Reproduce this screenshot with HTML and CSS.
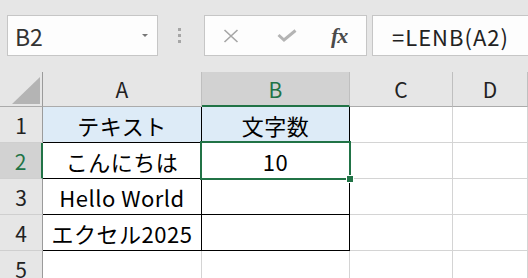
FILE: index.html
```html
<!DOCTYPE html>
<html lang="ja">
<head>
    <meta charset="UTF-8">
    <title>LENB</title>
    <link rel="stylesheet" href="styles.css">
</head>
<body>
<div class="topbar">
    <div class="namebox">
        <span>B2</span>
        <span class="arrow"></span>
    </div>
    <div class="grip"><i></i><i></i><i></i></div>
    <div class="fxbtns">
        <svg class="ico-x" width="16" height="14" viewBox="0 0 16 14">
            <path d="M1.5 1 L14.5 13 M14.5 1 L1.5 13" stroke="#a6a6a6" stroke-width="1.6" fill="none"/>
        </svg>
        <svg class="ico-check" width="20" height="13" viewBox="0 0 20 13">
            <path d="M1.5 6 L7 11 L18.5 1.5" stroke="#b4b4b4" stroke-width="3" fill="none"/>
        </svg>
        <span class="fx">fx</span>
    </div>
    <div class="formula">=LENB(A2)</div>
</div>

<div class="sheet">
    <div class="h corner"><div class="tri"></div></div>
    <div class="h">A</div>
    <div class="h sel">B</div>
    <div class="h">C</div>
    <div class="h">D</div>

    <div class="rh">1</div>
    <div class="c tb head">テキスト</div>
    <div class="c tb head">文字数</div>
    <div class="c"></div>
    <div class="c"></div>

    <div class="rh sel">2</div>
    <div class="c tb">こんにちは</div>
    <div class="c tb active">10</div>
    <div class="c"></div>
    <div class="c"></div>

    <div class="rh">3</div>
    <div class="c tb">Hello World</div>
    <div class="c tb"></div>
    <div class="c"></div>
    <div class="c"></div>

    <div class="rh">4</div>
    <div class="c tb">エクセル2025</div>
    <div class="c tb"></div>
    <div class="c"></div>
    <div class="c"></div>

    <div class="rh">5</div>
    <div class="c"></div>
    <div class="c"></div>
    <div class="c"></div>
    <div class="c"></div>
</div>
</body>
</html>
```

FILE: styles.css
```css
body {
    margin: 0;
    background: #e6e6e6;
    font-family: 'Noto Sans CJK JP', 'Noto Sans', sans-serif;
    color: #000;
    overflow: hidden;
}
.topbar {
    display: flex;
    height: 41px;
    padding: 15px 0 16px 7px;
}
.namebox {
    box-sizing: border-box;
    width: 151px;
    display: flex;
    align-items: center;
    justify-content: space-between;
    padding: 0 9px 0 7px;
    background: #fdfdfd;
    border: 1px solid #c6c6c6;
    font-size: 23px;
    color: #333;
}
.arrow {
    width: 0;
    height: 0;
    border-left: 3px solid transparent;
    border-right: 3px solid transparent;
    border-top: 3px solid #777;
}
.grip {
    width: 46px;
    display: flex;
    flex-direction: column;
    justify-content: center;
    gap: 3px;
    padding-left: 20px;
    box-sizing: border-box;
}
.grip i {
    width: 3px;
    height: 3px;
    background: #a6a6a6;
}
.fxbtns {
    box-sizing: border-box;
    width: 163px;
    display: flex;
    align-items: center;
    padding-left: 18px;
    background: #fdfdfd;
    border: 1px solid #c6c6c6;
}
.ico-check {
    margin-left: 38px;
}
.fx {
    margin-left: 34px;
    font-family: 'Liberation Serif', serif;
    font-style: italic;
    font-weight: bold;
    font-size: 22px;
    color: #4a4a4a;
    letter-spacing: -1px;
}
.formula {
    box-sizing: border-box;
    flex: 1;
    margin: 0 -10px 0 5px;
    padding: 0 0 0 19px;
    display: flex;
    align-items: center;
    background: #fdfdfd;
    border: 1px solid #c6c6c6;
    font-size: 22px;
    letter-spacing: 1px;
    color: #222;
}
.sheet {
    display: grid;
    grid-template-columns: 43px 159px 148px 103px 1fr;
    grid-template-rows: 35px repeat(5, 36px);
    background: #fff;
}
.sheet > div {
    box-sizing: border-box;
    display: flex;
    align-items: center;
    justify-content: center;
    font-size: 21px;
}
.h {
    background: #e6e6e6;
    border-right: 1px solid #bfbfbf;
    border-bottom: 1px solid #ababab;
    color: #222;
}
.h.sel {
    background: #d2d2d2;
    border-bottom: 2px solid #217346;
    color: #217346;
}
.corner {
    border-right-color: #9b9b9b;
}
.sheet > .corner {
    align-items: flex-end;
    justify-content: flex-end;
    padding: 0 2px 2px 0;
}
.tri {
    width: 28px;
    height: 27px;
    background: #b4b4b4;
    clip-path: polygon(100% 0, 100% 100%, 0 100%);
}
.rh {
    background: #e6e6e6;
    border-right: 1px solid #9b9b9b;
    border-bottom: 1px solid #cfcfcf;
    color: #222;
}
.rh.sel {
    background: #d2d2d2;
    border-right: 2px solid #217346;
    color: #217346;
}
.c {
    border-right: 1px solid #d4d4d4;
    border-bottom: 1px solid #d4d4d4;
}
.sheet > .c {
    font-size: 22px;
    letter-spacing: 0.5px;
}
.tb {
    border-right-color: #000;
    border-bottom-color: #000;
}
.head {
    background: #ddebf7;
}
.active {
    position: relative;
}
.active::after {
    content: '';
    position: absolute;
    top: -2px;
    left: -2px;
    right: -2px;
    bottom: -2px;
    border: 2px solid #217346;
}
.active::before {
    content: '';
    position: absolute;
    right: -5px;
    bottom: -5px;
    width: 6px;
    height: 6px;
    background: #217346;
    border: 1px solid #fff;
    z-index: 1;
}
```
